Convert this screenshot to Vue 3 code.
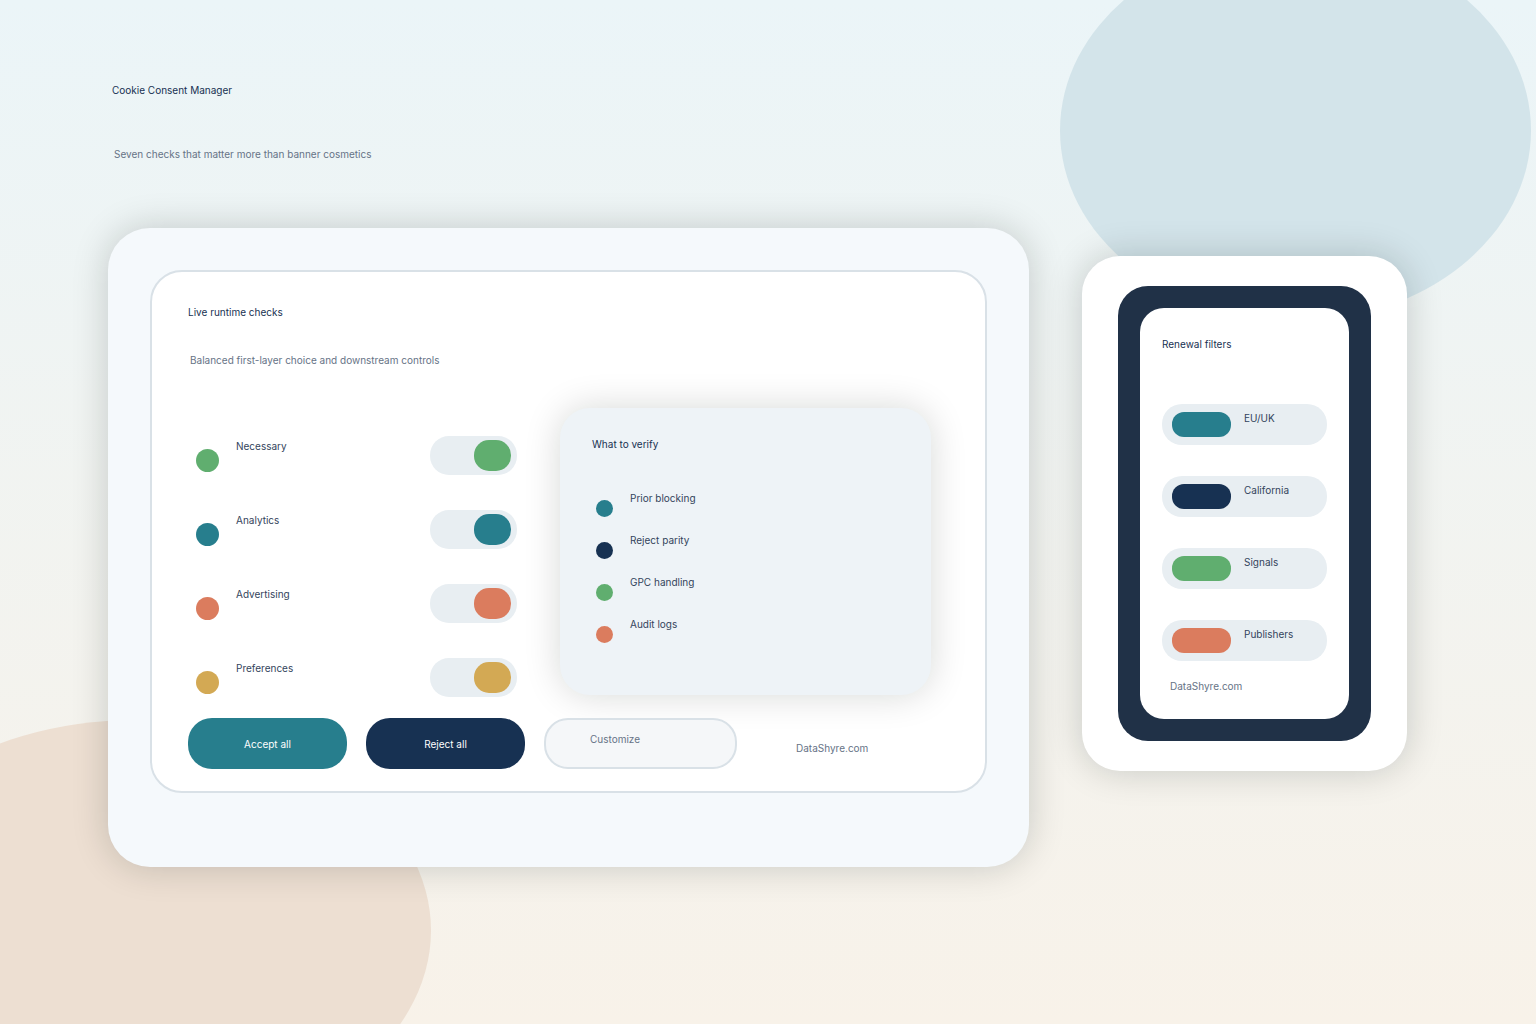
<script setup>
import { ref } from 'vue'

const categories = ref([
  { id: 'necessary', label: 'Necessary', color: '#60ae6f', enabled: true },
  { id: 'analytics', label: 'Analytics', color: '#277e8d', enabled: true },
  { id: 'advertising', label: 'Advertising', color: '#db7c5e', enabled: true },
  { id: 'preferences', label: 'Preferences', color: '#d3a954', enabled: true }
])

const checks = [
  { label: 'Prior blocking', color: '#277e8d' },
  { label: 'Reject parity', color: '#173152' },
  { label: 'GPC handling', color: '#60ae6f' },
  { label: 'Audit logs', color: '#db7c5e' }
]

const filters = [
  { label: 'EU/UK', color: '#277e8d' },
  { label: 'California', color: '#173152' },
  { label: 'Signals', color: '#60ae6f' },
  { label: 'Publishers', color: '#db7c5e' }
]

function setAll(enabled) {
  categories.value.forEach((category) => {
    category.enabled = enabled
  })
}
</script>

<template>
  <div class="page">
    <div class="blob blob-sky"></div>
    <div class="blob blob-sand"></div>

    <header class="page-header">
      <h1>Cookie Consent Manager</h1>
      <p class="subtitle">Seven checks that matter more than banner cosmetics</p>
    </header>

    <main class="stage">
      <section class="console">
        <div class="panel">
          <h2>Live runtime checks</h2>
          <p class="subtitle panel-subtitle">Balanced first-layer choice and downstream controls</p>

          <div class="panel-body">
            <div class="categories">
              <label v-for="category in categories" :key="category.id" class="category" :for="category.id">
                <span class="dot" :style="{ background: category.color }"></span>
                <span class="category-name">{{ category.label }}</span>
                <input
                  :id="category.id"
                  v-model="category.enabled"
                  class="switch"
                  type="checkbox"
                  :style="{ color: category.color }"
                />
              </label>
            </div>

            <section class="verify">
              <h3>What to verify</h3>
              <ul class="checks">
                <li v-for="check in checks" :key="check.label" class="check">
                  <span class="check-dot" :style="{ background: check.color }"></span>
                  <span>{{ check.label }}</span>
                </li>
              </ul>
            </section>
          </div>

          <div class="actions">
            <button type="button" class="action accept" @click="setAll(true)">Accept all</button>
            <button type="button" class="action reject" @click="setAll(false)">Reject all</button>
            <button type="button" class="action customize">Customize</button>
            <span class="brand">DataShyre.com</span>
          </div>
        </div>
      </section>

      <aside class="phone">
        <div class="bezel">
          <div class="screen">
            <h2>Renewal filters</h2>
            <div class="filters">
              <button v-for="filter in filters" :key="filter.label" type="button" class="filter">
                <span class="swatch" :style="{ background: filter.color }"></span>
                <span class="filter-name">{{ filter.label }}</span>
              </button>
            </div>
            <p class="phone-brand">DataShyre.com</p>
          </div>
        </div>
      </aside>
    </main>
  </div>
</template>

<style>
body {
  margin: 0;
}
</style>

<style scoped>
.page {
  position: relative;
  box-sizing: border-box;
  min-height: 100vh;
  padding: 82px 129px 64px 108px;
  overflow: hidden;
  background: linear-gradient(#ebf5f8, #f8f2e9);
  color: #33445c;
  font-family: Inter, "Liberation Sans", sans-serif;
  font-size: 10px;
  line-height: 16px;
}

.page *,
.page *::before {
  box-sizing: border-box;
}

h1,
h2,
h3,
p,
ul {
  margin: 0;
  padding: 0;
  font-size: 10px;
  font-weight: 400;
}

h1,
h2,
h3 {
  color: #173152;
}

button {
  margin: 0;
  border: 0;
  font: inherit;
  cursor: pointer;
}

.blob {
  position: absolute;
  border-radius: 50%;
}

.blob-sky {
  top: -60px;
  right: 5px;
  width: 471px;
  height: 381px;
  background: #d3e4ea;
}

.blob-sand {
  bottom: -117px;
  left: -160px;
  width: 591px;
  height: 421px;
  background: #eddfd2;
}

.page-header {
  position: relative;
  padding-left: 4px;
}

.subtitle {
  margin-top: 48px;
  padding-left: 2px;
  color: #667386;
}

.stage {
  position: relative;
  display: flex;
  align-items: flex-start;
  gap: 53px;
  margin-top: 66px;
}

.console {
  flex: 1;
  padding: 42px 42px 74px;
  border-radius: 42px;
  background: #f5f9fc;
  box-shadow: 0 0 36px rgba(10, 20, 15, 0.19);
}

.panel {
  padding: 32px 54px 22px 36px;
  border: 2px solid #d9e1e7;
  border-radius: 32px;
  background: #fff;
}

.panel-subtitle {
  margin-top: 32px;
}

.panel-body {
  display: flex;
  align-items: flex-start;
  gap: 43px;
  margin-top: 40px;
}

.categories {
  display: flex;
  flex: 0 0 329px;
  flex-direction: column;
  gap: 35px;
  padding-top: 28px;
}

.category {
  display: flex;
  align-items: flex-start;
  height: 39px;
  padding-left: 8px;
}

.dot {
  width: 23px;
  height: 23px;
  margin-top: 13px;
  border-radius: 50%;
}

.category-name {
  flex: 1;
  padding: 2px 0 0 17px;
}

.switch {
  display: flex;
  align-items: center;
  width: 87px;
  height: 39px;
  margin: 0;
  padding: 0 6px;
  border-radius: 19px;
  background: #e8eef2;
  appearance: none;
  cursor: pointer;
}

.switch::before {
  width: 37px;
  height: 31px;
  border-radius: 15px;
  background: currentColor;
  content: "";
}

.switch:checked {
  justify-content: flex-end;
}

.verify {
  flex: 1;
  padding: 28px 32px 52px;
  border-radius: 30px;
  background: #eef3f7;
  box-shadow: 0 0 36px rgba(10, 20, 15, 0.16);
}

.checks {
  display: flex;
  flex-direction: column;
  gap: 15px;
  margin-top: 38px;
  padding-left: 4px;
  list-style: none;
}

.check {
  display: flex;
  gap: 17px;
  height: 27px;
}

.check-dot {
  align-self: flex-end;
  width: 17px;
  height: 17px;
  border-radius: 50%;
}

.actions {
  display: flex;
  gap: 19px;
  margin-top: 21px;
}

.action {
  width: 159px;
  height: 51px;
  padding: 0;
  border-radius: 24px;
  color: #fff;
}

.accept {
  background: #277e8d;
}

.reject {
  background: #173152;
}

.customize {
  display: flex;
  align-items: flex-start;
  width: 193px;
  padding: 11px 44px;
  border: 2px solid #d9e1e7;
  background: #f5f7f9;
  color: #667386;
}

.brand {
  padding: 22px 0 0 40px;
  color: #667386;
}

.phone {
  flex: 0 0 325px;
  margin-top: 28px;
  padding: 30px 36px;
  border-radius: 38px;
  background: #fff;
  box-shadow: 0 0 36px rgba(10, 20, 15, 0.19);
}

.bezel {
  padding: 22px;
  border-radius: 30px;
  background: #203147;
}

.screen {
  padding: 28px 22px 25px;
  border-radius: 24px;
  background: #fff;
}

.filters {
  display: flex;
  flex-direction: column;
  gap: 31px;
  margin-top: 52px;
}

.filter {
  display: flex;
  gap: 13px;
  align-items: center;
  height: 41px;
  padding: 0 10px;
  border-radius: 20px;
  background: #e8eef2;
  color: #33445c;
}

.swatch {
  width: 59px;
  height: 25px;
  border-radius: 12px;
}

.filter-name {
  align-self: flex-start;
  padding-top: 6px;
}

.phone-brand {
  margin-top: 17px;
  padding-left: 8px;
  color: #667386;
}
</style>
